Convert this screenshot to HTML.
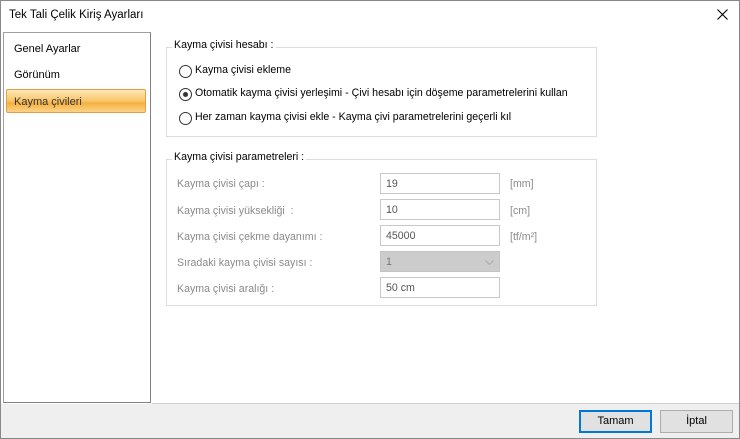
<!DOCTYPE html><html><head><style>
*{margin:0;padding:0;box-sizing:border-box}
body{width:740px;height:439px;position:relative;font-family:"Liberation Sans",sans-serif;font-size:10.6px;color:#000;background:#fff;overflow:hidden}
.a{position:absolute}
.win{left:0;top:0;width:740px;height:439px;border:1px solid #888}
.lbl{color:#8a8a8a;position:absolute;left:177px}
.inp{position:absolute;left:380px;width:120px;height:21px;border:1px solid #c8c8c8;background:#fff;color:#555;padding:4px 5px}
.unit{position:absolute;left:510px;color:#8a8a8a}
.rad{position:absolute;left:179px;width:13px;height:13px;border:1px solid #333;border-radius:50%;background:#fff}
.rt{position:absolute;left:195px}
.grp{position:absolute;left:166px;width:431px;border:1px solid #dcdcdc}
.leg{position:absolute;background:#fff;padding:0 2px;left:172px}
.btn{position:absolute;top:410px;height:23px;background:#e1e1e1;border:1px solid #adadad;text-align:center;line-height:21px;font-size:11px}
</style></head><body>
<div class="a win"></div>
<div class="a" style="left:9px;top:9px;font-size:11.5px">Tek Tali Çelik Kiriş Ayarları</div>
<svg class="a" style="left:717px;top:9px" width="11" height="11"><path d="M0.5 0.5L10.5 10.5M10.5 0.5L0.5 10.5" stroke="#000" stroke-width="1.1"/></svg>
<div class="a" style="left:3px;top:32px;width:148px;height:371px;border:1px solid #828282;border-top-color:#a0a0a0;border-left-color:#a0a0a0"></div>
<div class="a" style="left:14px;top:43px;font-size:11px">Genel Ayarlar</div>
<div class="a" style="left:14px;top:69px;font-size:11px">Görünüm</div>
<div class="a" style="left:6px;top:89px;width:140px;height:24px;border:1px solid #e0a04a;border-radius:2px;background:linear-gradient(#fde8b8,#f9c468 50%,#f6b040 60%,#fbd488)"></div>
<div class="a" style="left:14px;top:96px;font-size:11px;color:#333">Kayma çivileri</div>
<div class="a" style="left:152px;top:403px;width:587px;height:1px;background:#d0d0d0"></div>
<div class="a" style="left:1px;top:404px;width:738px;height:34px;background:#efefef"></div>

<div class="grp" style="top:47px;height:90px"></div>
<div class="leg" style="top:39px">Kayma çivisi hesabı :</div>
<div class="rad" style="top:65px"></div><div class="rt" style="top:64px">Kayma çivisi ekleme</div>
<div class="rad" style="top:88px"><div class="a" style="left:3px;top:3px;width:5px;height:5px;border-radius:50%;background:#333"></div></div><div class="rt" style="top:87px">Otomatik kayma çivisi yerleşimi - Çivi hesabı için döşeme parametrelerini kullan</div>
<div class="rad" style="top:112px"></div><div class="rt" style="top:111px">Her zaman kayma çivisi ekle - Kayma çivi parametrelerini geçerli kıl</div>

<div class="grp" style="top:159px;height:147px"></div>
<div class="leg" style="top:151px">Kayma çivisi parametreleri :</div>
<div class="lbl" style="top:178px">Kayma çivisi çapı :</div><div class="inp" style="top:173px">19</div><div class="unit" style="top:178px">[mm]</div>
<div class="lbl" style="top:205px">Kayma çivisi yüksekliği&nbsp; :</div><div class="inp" style="top:199px">10</div><div class="unit" style="top:205px">[cm]</div>
<div class="lbl" style="top:231px">Kayma çivisi çekme dayanımı :</div><div class="inp" style="top:225px">45000</div><div class="unit" style="top:231px">[tf/m²]</div>
<div class="lbl" style="top:257px">Sıradaki kayma çivisi sayısı :</div><div class="inp" style="top:251px;background:#cccccc;border-color:#c4c4c4;color:#777">1<svg class="a" style="right:5px;top:8px" width="9" height="5"><path d="M0.5 0.5L4.5 4.5L8.5 0.5" stroke="#aaa" fill="none"/></svg></div>
<div class="lbl" style="top:283px">Kayma çivisi aralığı :</div><div class="inp" style="top:277px">50 cm</div>

<div class="btn" style="left:579px;width:73px;border:2px solid #0078d7;line-height:19px">Tamam</div>
<div class="btn" style="left:660px;width:73px">İptal</div>
</body></html>
